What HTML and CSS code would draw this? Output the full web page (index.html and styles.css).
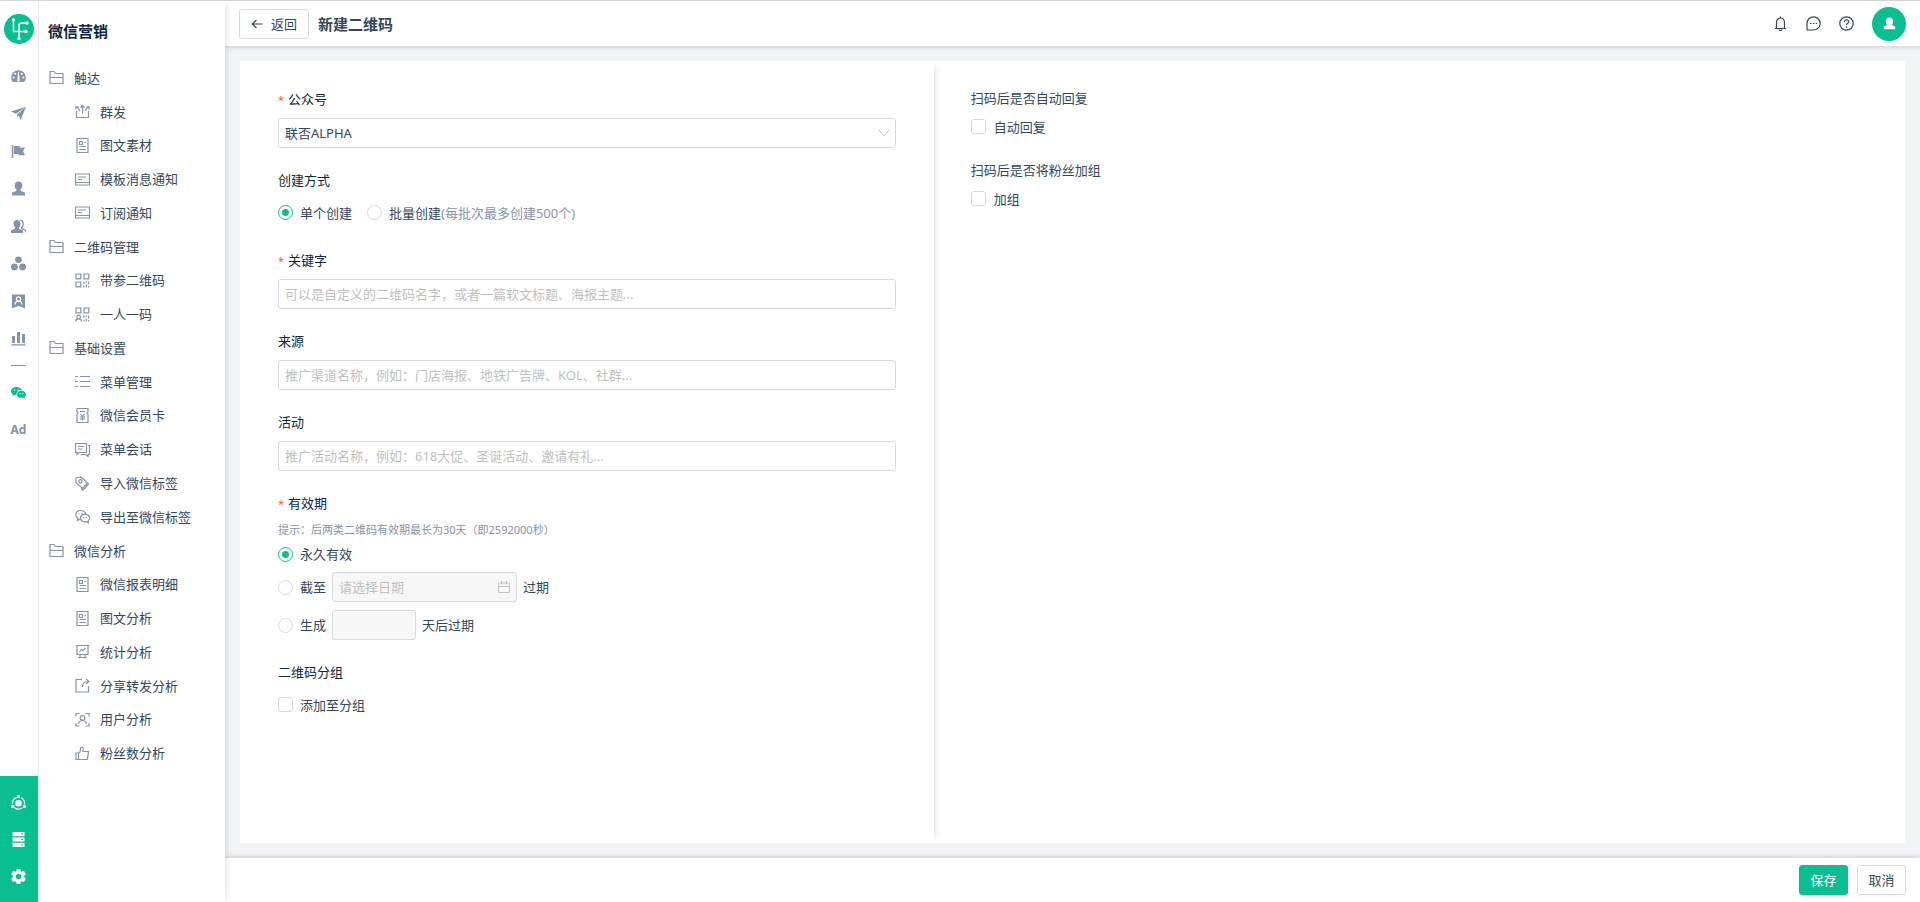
FILE: index.html
```html
<!DOCTYPE html>
<html lang="zh-CN">
<head>
    <meta charset="utf-8">
    <meta name="viewport" content="width=device-width, initial-scale=1">
    <title>新建二维码</title>
    <link rel="stylesheet" href="styles.css">
</head>
<body>
    <!-- icon sprite -->
    <svg class="sprite" aria-hidden="true">
        <symbol id="i-folder" viewBox="0 0 15 15"><path d="M1 13.500V1.500h4l1.500 2h7.500v10zM1 7.500h13"/></symbol>
        <symbol id="i-send" viewBox="0 0 15 15"><path d="M1.500 7v6.500h12V7M7.500 9.500V1.500M5.500 3.500l2-2 2 2M4.500 7C4.500 5 3.500 4 1.500 3M1 5.500V2.800h2.500M10.500 7c0-2 1-3 3-4M14 5.500V2.800h-2.500"/></symbol>
        <symbol id="i-doc" viewBox="0 0 15 15"><path d="M2 .5h11v14H2zM4.500 3.500h3v3h-3zM9.500 4.500h1.500M4.500 8.500h6.500M4.500 11.500h6.500"/></symbol>
        <symbol id="i-card" viewBox="0 0 15 15"><path d="M.5 2h14v11H.5zM.5 10.500h14M3 5h8M3 7.500h4"/></symbol>
        <symbol id="i-qr" viewBox="0 0 15 15"><path d="M1 1h4.800v4.800H1zM9 1h4.800v4.800H9zM1 9h4.800v4.800H1zM9 8.500v2.500M9 12.500v2M11.300 8.500v1.500M13.500 8.500v3M11.300 11.500v3M13.500 13v1.500"/></symbol>
        <symbol id="i-qruser" viewBox="0 0 15 15"><path d="M1 1h4.800v4.800H1zM9 1h4.800v4.800H9zM1.800 10a1.800 1.800 0 1 0 3.600 0 1.800 1.800 0 1 0-3.600 0M.6 14.500c.2-1.700 1-2.700 3-2.700s2.800 1 3 2.700M9 8.500v2.500M9 12.500v2M11.300 8.500v1.500M13.500 8.500v3M11.300 11.500v3M13.500 13v1.500"/></symbol>
        <symbol id="i-list" viewBox="0 0 15 15"><path d="M0 2.500h3M5 2.500h10M0 7.500h3M5 7.500h10M0 12.500h3M5 12.500h10"/></symbol>
        <symbol id="i-member" viewBox="0 0 15 15"><path d="M2 .5h11v3.200a1.500 1.500 0 0 0 0 2.600v8.200H2V6.300a1.500 1.500 0 0 0 0-2.600zM5 3.500h5M5.500 6l2 2.500 2-2.500M5 9h5M5 11h5M7.500 8.500v4"/></symbol>
        <symbol id="i-chat" viewBox="0 0 15 15"><path d="M.5 1.500h11v9H4l-2 2v-2H.500zM3 4.500h6M3 7h4M13 3.500h1.500v9H13v2l-2-2H6"/></symbol>
        <symbol id="i-tag" viewBox="0 0 15 15"><path d="M1 2l5-1 6.500 6-5 5.500L1 6.500zM14 7.500L8 14.200l-2-1.700M3.800 5.200a1.600 1.600 0 1 0 3.200 0 1.600 1.600 0 1 0-3.200 0"/></symbol>
        <symbol id="i-wxline" viewBox="0 0 15 15"><path d="M5 10l-2.500 1.500.3-2.300C-.8 6.500.7 1.500 5.500 1.500c2.700 0 4.500 1.500 5 3.500M10 5.200c-6 .2-6.200 7.500 0 7.600l1.500-.2 1.800 1.200-.2-2C16 9.500 14.200 5.200 10 5.200zM3.800 4v1M7 4v1M8.500 8v1M11.500 8v1"/></symbol>
        <symbol id="i-board" viewBox="0 0 15 15"><path d="M.5 1.500h14M2 1.500v9h11v-9M5 10.500v3M10 10.500v3M3 13.500h9M4.500 8l2-2.500 1.500 1L10.500 4"/></symbol>
        <symbol id="i-share" viewBox="0 0 15 15"><path d="M7 1.500H1v12.500h12.500V8M7.500 9c0-4 1.500-5.500 6-5.500M11 1l3 2.500-3 2.500"/></symbol>
        <symbol id="i-scan" viewBox="0 0 15 15"><path d="M1 4.500V1.500h3.500M10.500 1.500H14v3M14 11v3h-3.500M4.500 14H1v-3M5.200 6a2.300 2.300 0 1 0 4.600 0 2.300 2.300 0 1 0-4.600 0M3.500 12c.3-2.500 1.500-3.500 4-3.500s3.700 1 4 3.500"/></symbol>
        <symbol id="i-like" viewBox="0 0 15 15"><path d="M1 7h2.500v6.500H1zM3.500 7.500L5 6l.8-4.500c1.700-.7 2.700.5 2.500 2L8 5.500h5.500l-1 8h-9"/></symbol>
    </svg>

    <div class="app">
        <aside class="rail">
            <a class="logo" href="#" aria-label="首页">
                <svg viewBox="0 0 30 30"><circle cx="15" cy="15" r="15" fill="#09be90"/><g fill="none" stroke="#fff" stroke-width="1.500"><path d="M9.500 6v11.500h13.500M15 24V11.500q0-2.500 2.500-2.500H23"/></g><g fill="#fff"><circle cx="9.500" cy="6" r="1.700"/><circle cx="23" cy="9" r="1.700"/><circle cx="22" cy="17.500" r="1.700"/><circle cx="15" cy="24.500" r="1.700"/></g></svg>
            </a>
            <nav class="rail-main">
                <a href="#" aria-label="概览"><svg viewBox="0 0 15 15"><path d="M1.800 13A7.300 7.300 0 1 1 13.200 13z"/><g fill="#fff"><circle cx="2.700" cy="8.500" r="1"/><circle cx="4.200" cy="4.700" r="1"/><circle cx="10.800" cy="4.700" r="1"/><circle cx="12.300" cy="8.500" r="1"/><path d="M7 3h1l.7 8.500a1.200 1.200 0 0 1-2.400 0z"/></g></svg></a>
                <a href="#" aria-label="发送"><svg viewBox="0 0 15 15"><path d="M15 .8L0 5.500l5 2.300zM15 .8L6 8.500l.2 2.800 1.800-1.800 1.500 5z"/></svg></a>
                <a href="#" aria-label="旗帜"><svg viewBox="0 0 15 15"><path d="M.8 1h1.400v13H.8zM2.800 2h6v1.500H14l-2 3.700 2 4H7.500V10H2.800z"/></svg></a>
                <a href="#" aria-label="用户"><svg viewBox="0 0 15 15"><path d="M7.500.5c2.400 0 3.800 1.500 3.800 4 0 2-.8 3-1.800 4v1.300l4.500 2V14.500H1v-2.700l4.500-2V8.500c-1-1-1.800-2-1.800-4 0-2.500 1.400-4 3.800-4z"/></svg></a>
                <a href="#" aria-label="用户组"><svg viewBox="0 0 15 15"><path d="M6 1c2.200 0 3.500 1.500 3.500 3.700 0 1.800-.7 3-1.600 3.900v1l4.100 2V14H0v-2.400l4.100-2v-1C3.200 7.700 2.500 6.500 2.500 4.700 2.500 2.500 3.800 1 6 1z"/><path d="M9.500 1.200c3 .3 3.700 5 1.200 7.300v1l3.800 2v1.800" fill="none" stroke="#8494a9" stroke-width="1.300"/></svg></a>
                <a href="#" aria-label="分组"><svg viewBox="0 0 15 15"><circle cx="7.500" cy="3.700" r="3.300"/><circle cx="3.400" cy="10.900" r="3.400"/><circle cx="11.600" cy="10.900" r="3.400"/></svg></a>
                <a href="#" aria-label="名片"><svg viewBox="0 0 15 15"><path d="M1 .5h13v14L7.500 12 1 14.500z"/><g fill="none" stroke="#fff" stroke-width="1.200"><circle cx="7.500" cy="5" r="2.100"/><path d="M4 10.500c.2-2.500 1.300-3.300 3.500-3.300s3.300.8 3.500 3.300"/></g></svg></a>
                <a href="#" aria-label="统计"><svg viewBox="0 0 15 15"><path d="M1 5h3v7H1zM6 1h3v11H6zM11 3h3v9h-3zM.5 13.200h14v1.300H.5z"/></svg></a>
            </nav>
            <nav class="rail-extra">
                <a class="active" href="#" aria-label="微信"><svg viewBox="0 0 15 15"><path d="M5.500 2C2.500 2 0 3.800 0 6.300c0 1.300.7 2.400 1.800 3.200L1.300 11l2-1 2 .4C5 7 7.500 5 11 5.200 10.300 3.300 8.200 2 5.500 2z"/><path d="M10.500 5.800c2.500 0 4.500 1.600 4.500 3.600 0 1.100-.6 2-1.500 2.700l.4 1.400-1.700-.9c-3.500.8-6.300-.8-6.300-3.200 0-2 2-3.600 4.600-3.600z"/><g fill="#fff"><circle cx="3.700" cy="5" r=".7"/><circle cx="7.200" cy="5" r=".7"/><circle cx="9" cy="8.400" r=".6"/><circle cx="12" cy="8.400" r=".6"/></g></svg></a>
                <a class="ad" href="#">Ad</a>
            </nav>
            <nav class="rail-bottom">
                <a href="#" aria-label="集成"><svg viewBox="0 0 15 15"><circle cx="7.500" cy="8.200" r="3.300"/><circle cx="7.500" cy="8.200" r="6" fill="none" stroke="#fff" stroke-width="1.200" stroke-dasharray="8.500 4.070" stroke-dashoffset="-5.170"/><circle cx="7.500" cy="1.700" r="1.600"/><circle cx="1.700" cy="11.500" r="1.700"/><circle cx="13.300" cy="11.500" r="1.700"/></svg></a>
                <a href="#" aria-label="数据"><svg viewBox="0 0 15 15"><path d="M1.500 0h12v4.200h-12zM1.500 5.400h12v4.200h-12zM1.500 10.800h12V15h-12z"/><path d="M10 1.500h2v1h-2zM10 7h2v1h-2zM10 12.500h2v1h-2z" fill="#09be90"/></svg></a>
                <a href="#" aria-label="设置"><svg viewBox="0 0 15 15"><path fill-rule="evenodd" d="M5.700 0h3.600l.5 2.200 1 .6L13 2l1.800 3.200-1.600 1.600v1.400l1.600 1.600L13 13l-2.200-.8-1 .6-.5 2.200H5.700l-.5-2.200-1-.6L2 13 .2 9.800l1.600-1.600V6.800L.2 5.200 2 2l2.200.8 1-.6zM7.500 4.800a2.700 2.700 0 1 0 0 5.400 2.700 2.700 0 0 0 0-5.400z"/></svg></a>
            </nav>
        </aside>

        <aside class="sidebar">
            <h2>微信营销</h2>
            <nav class="menu">
                <a class="group" href="#"><svg><use href="#i-folder"/></svg>触达</a>
                <a href="#"><svg><use href="#i-send"/></svg>群发</a>
                <a href="#"><svg><use href="#i-doc"/></svg>图文素材</a>
                <a href="#"><svg><use href="#i-card"/></svg>模板消息通知</a>
                <a href="#"><svg><use href="#i-card"/></svg>订阅通知</a>
                <a class="group" href="#"><svg><use href="#i-folder"/></svg>二维码管理</a>
                <a href="#"><svg><use href="#i-qr"/></svg>带参二维码</a>
                <a href="#"><svg><use href="#i-qruser"/></svg>一人一码</a>
                <a class="group" href="#"><svg><use href="#i-folder"/></svg>基础设置</a>
                <a href="#"><svg><use href="#i-list"/></svg>菜单管理</a>
                <a href="#"><svg><use href="#i-member"/></svg>微信会员卡</a>
                <a href="#"><svg><use href="#i-chat"/></svg>菜单会话</a>
                <a href="#"><svg><use href="#i-tag"/></svg>导入微信标签</a>
                <a href="#"><svg><use href="#i-wxline"/></svg>导出至微信标签</a>
                <a class="group" href="#"><svg><use href="#i-folder"/></svg>微信分析</a>
                <a href="#"><svg><use href="#i-doc"/></svg>微信报表明细</a>
                <a href="#"><svg><use href="#i-doc"/></svg>图文分析</a>
                <a href="#"><svg><use href="#i-board"/></svg>统计分析</a>
                <a href="#"><svg><use href="#i-share"/></svg>分享转发分析</a>
                <a href="#"><svg><use href="#i-scan"/></svg>用户分析</a>
                <a href="#"><svg><use href="#i-like"/></svg>粉丝数分析</a>
            </nav>
        </aside>

        <div class="main">
            <header class="topbar">
                <button type="button" class="btn back"><svg viewBox="0 0 12 12"><path d="M11.500 6H1.500M5.500 1.800L1.300 6l4.200 4.200"/></svg>返回</button>
                <h1>新建二维码</h1>
                <div class="tools">
                    <a href="#" aria-label="通知"><svg viewBox="0 0 15 15"><path d="M2 12.500h11M3.500 12.500V7c0-3 1.500-5 4-5s4 2 4 5v5.500M7.500 2V.5M6 13.500c.5 1.300 2.500 1.300 3 0"/></svg></a>
                    <a href="#" aria-label="消息"><svg viewBox="0 0 15 15"><path d="M1 14V7.500A6.600 6.600 0 1 1 7.500 14zM4 7.500h1.500M6.800 7.500h1.500M9.600 7.500h1.500"/></svg></a>
                    <a href="#" aria-label="帮助"><svg viewBox="0 0 15 15"><circle cx="7.500" cy="7.500" r="6.700"/><path d="M5.300 6c0-3 4.500-2.700 4.400-.2 0 1.400-2.200 1.500-2.200 3.200M7.500 10.300v1.400"/></svg></a>
                    <a class="avatar" href="#" aria-label="账户"><svg viewBox="0 0 15 15"><path d="M7.500 1.500c2.300 0 3.700 1.500 3.700 3.700 0 1.800-.8 2.800-1.700 3.600l3.700 1.800v2.700H1.800v-2.700l3.700-1.800c-.9-.8-1.700-1.800-1.700-3.600 0-2.200 1.400-3.700 3.700-3.700z"/></svg></a>
                </div>
            </header>

            <form class="content">
                <section class="panel panel-form">
                    <div class="field">
                        <label class="title required" for="account">公众号</label>
                        <div class="select-wrap">
                            <select class="control" id="account"><option>联否ALPHA</option></select>
                            <svg viewBox="0 0 12 12"><path d="M1 3l5 6 5-6"/></svg>
                        </div>
                    </div>
                    <div class="field" role="radiogroup" aria-labelledby="mode-title">
                        <div class="title" id="mode-title">创建方式</div>
                        <div class="options">
                            <label class="option"><input type="radio" name="mode" checked>单个创建</label>
                            <label class="option"><input type="radio" name="mode"><span>批量创建<span class="note">(每批次最多创建500个)</span></span></label>
                        </div>
                    </div>
                    <div class="field">
                        <label class="title required" for="keyword">关键字</label>
                        <input class="control" id="keyword" type="text" placeholder="可以是自定义的二维码名字，或者一篇软文标题、海报主题...">
                    </div>
                    <div class="field">
                        <label class="title" for="source">来源</label>
                        <input class="control" id="source" type="text" placeholder="推广渠道名称，例如：门店海报、地铁广告牌、KOL、社群...">
                    </div>
                    <div class="field">
                        <label class="title" for="activity">活动</label>
                        <input class="control" id="activity" type="text" placeholder="推广活动名称，例如：618大促、圣诞活动、邀请有礼...">
                    </div>
                    <div class="field" role="radiogroup" aria-labelledby="expire-title">
                        <div class="title required" id="expire-title">有效期</div>
                        <p class="hint">提示：后两类二维码有效期最长为30天（即2592000秒）</p>
                        <div class="expire">
                            <label class="option"><input type="radio" name="expire" checked>永久有效</label>
                            <div class="expire-row">
                                <label class="option"><input type="radio" name="expire">截至</label>
                                <div class="date-wrap">
                                    <input class="control" type="text" placeholder="请选择日期" aria-label="过期日期" disabled>
                                    <svg viewBox="0 0 12 12"><path d="M.5 2h11v9.500H.5zM.5 5.500h11M3.500 0v3.500M8.500 0v3.500"/></svg>
                                </div>
                                过期
                            </div>
                            <div class="expire-row">
                                <label class="option"><input type="radio" name="expire">生成</label>
                                <input class="control days" type="text" aria-label="天数" disabled>
                                天后过期
                            </div>
                        </div>
                    </div>
                    <div class="field">
                        <div class="title">二维码分组</div>
                        <div class="options">
                            <label class="option"><input type="checkbox">添加至分组</label>
                        </div>
                    </div>
                </section>

                <section class="panel panel-action">
                    <div class="action">
                        <p>扫码后是否自动回复</p>
                        <label class="option"><input type="checkbox">自动回复</label>
                    </div>
                    <div class="action">
                        <p>扫码后是否将粉丝加组</p>
                        <label class="option"><input type="checkbox">加组</label>
                    </div>
                </section>
            </form>

            <footer class="actions">
                <button type="button" class="btn primary">保存</button>
                <button type="button" class="btn">取消</button>
            </footer>
        </div>
    </div>
</body>
</html>
```
FILE: styles.css
```css
* { box-sizing: border-box; }

body {
    margin: 0;
    font-family: "Noto Sans", "Noto Sans CJK SC", sans-serif;
    font-size: 13px;
    line-height: 20px;
    color: #33475b;
}

a {
    color: inherit;
    text-decoration: none;
}

h1, h2, p { margin: 0; }

h1, h2 {
    font-size: 15px;
    font-weight: 600;
    line-height: 24px;
}

button, input, select {
    font: inherit;
    color: inherit;
}

svg {
    display: block;
    flex: none;
}

.sprite {
    position: absolute;
    width: 0;
    height: 0;
}

.app {
    display: flex;
    min-height: 100vh;
    border-top: 1px solid #d9d9db;
}

/* icon rail */
.rail {
    display: flex;
    flex-direction: column;
    width: 39px;
    padding-top: 13px;
    border-right: 1px solid #e6e8eb;
    fill: #8494a9;
}

.rail nav {
    display: flex;
    flex-direction: column;
    align-items: center;
    padding-right: 1px;
}

.rail nav svg {
    width: 15px;
    height: 15px;
}

.logo svg {
    width: 30px;
    height: 30px;
    margin-left: 4px;
}

.rail-main {
    justify-content: space-between;
    height: 277px;
    margin-top: 25px;
}

.rail-extra {
    gap: 19px;
    margin-top: 19px;
}

.rail-extra::before {
    content: "";
    width: 15px;
    height: 1px;
    background: #8494a9;
}

.rail-extra .active { fill: #09be90; }

.rail-extra .ad {
    font-size: 12px;
    font-weight: 700;
    line-height: 22px;
    color: #8494a9;
}

.rail .rail-bottom {
    gap: 22px;
    height: 126px;
    margin-top: auto;
    padding-top: 19px;
    background: #09be90;
    fill: #fff;
}

/* second level menu */
.sidebar {
    position: relative;
    z-index: 2;
    width: 186px;
    padding-top: 18px;
    background: #fff;
    box-shadow: 4px 0 6px -3px rgba(0, 0, 0, 0.15);
}

.sidebar h2 {
    padding-left: 9px;
    color: #0b2644;
}

.menu {
    display: grid;
    grid-auto-rows: 1fr;
    height: 709px;
    margin-top: 18px;
}

.menu a {
    display: flex;
    align-items: center;
    gap: 10px;
    padding-left: 36px;
}

.menu .group { padding-left: 10px; }

.menu svg {
    width: 15px;
    height: 15px;
    fill: none;
    stroke: #8494a9;
    stroke-width: 1.2;
}

/* page */
.main {
    display: flex;
    flex: 1;
    flex-direction: column;
    min-width: 0;
    background: #f2f3f7;
}

.topbar {
    display: flex;
    align-items: center;
    gap: 9px;
    height: 45px;
    padding: 0 14px;
    background: #fff;
    box-shadow: 0 1px 5px rgba(0, 0, 0, 0.15);
}

.btn {
    min-width: 49px;
    height: 30px;
    padding: 0 10px;
    border: 1px solid #d5dbe1;
    border-radius: 3px;
    background: #fff;
    box-shadow: 0 2px 0 rgba(0, 0, 0, 0.02);
}

.btn.primary {
    border-color: #09be90;
    background: #09be90;
    color: #fff;
}

.back {
    display: flex;
    align-items: center;
    gap: 8px;
    padding: 0 11px;
    box-shadow: none;
}

.back svg {
    width: 12px;
    height: 12px;
    fill: none;
    stroke: #33475b;
    stroke-width: 1.2;
}

.tools {
    display: flex;
    align-items: center;
    gap: 18px;
    margin-left: auto;
}

.tools svg {
    width: 15px;
    height: 15px;
    fill: none;
    stroke: #33475b;
    stroke-width: 1.2;
}

.tools .avatar {
    display: flex;
    align-items: center;
    justify-content: center;
    width: 34px;
    height: 34px;
    border-radius: 50%;
    background: #09be90;
}

.tools .avatar svg {
    fill: #fff;
    stroke: none;
}

.content {
    display: flex;
    flex: 1;
    margin: 15px;
}

.panel { background: #fff; }

.panel-form {
    position: relative;
    width: calc(100% * 5 / 12);
    padding: 19px 38px;
    box-shadow: 6px 0 6px -5px rgba(0, 0, 0, 0.15);
}

.panel-action {
    flex: 1;
    padding: 22px 37px;
}

.field { margin-bottom: 13px; }

.title {
    display: block;
    line-height: 38px;
    color: #0b2644;
}

.required::before {
    content: "*";
    margin-right: 4px;
    font-size: 11px;
    line-height: 1;
    color: #ff5c35;
}

.control {
    display: block;
    width: 100%;
    height: 30px;
    padding: 0 6px;
    border: 1px solid #d5dbe1;
    border-radius: 3px;
    background: #fff;
    appearance: none;
}

.control::placeholder { color: #bfbfbf; }

.control:disabled { background: #f7f7f7; }

.select-wrap, .date-wrap { position: relative; }

.select-wrap svg, .date-wrap svg {
    position: absolute;
    top: 9px;
    right: 6px;
    width: 12px;
    height: 12px;
    fill: none;
    stroke: #bfc4ca;
}

.options {
    display: flex;
    gap: 15px;
    height: 29px;
    padding-bottom: 2px;
}

.option {
    display: flex;
    align-items: center;
    gap: 7px;
}

.option input {
    flex: none;
    width: 15px;
    height: 15px;
    margin: 0;
    border: 1px solid #d5dbe1;
    border-radius: 3px;
    background: #fff;
    appearance: none;
}

.option input[type="radio"] { border-radius: 50%; }

.option input[type="radio"]:checked {
    border-color: #09be90;
    background: radial-gradient(#09be90 3px, #fff 4px);
}

.note, .hint { color: #8494a9; }

.hint {
    font-size: 11px;
    line-height: 16px;
}

.expire {
    display: flex;
    flex-direction: column;
    gap: 8px;
    padding-top: 6px;
}

.expire-row {
    display: flex;
    align-items: center;
    gap: 6px;
}

.date-wrap { width: 185px; }

.date-wrap svg { right: 7px; }

.days { width: 84px; }

.action { margin-bottom: 15px; }

.action p { line-height: 30px; }

.action .option {
    gap: 8px;
    height: 27px;
}

.actions {
    display: flex;
    align-items: center;
    justify-content: flex-end;
    gap: 9px;
    height: 44px;
    padding: 0 14px;
    background: #fff;
    box-shadow: 0 -1px 5px rgba(0, 0, 0, 0.15);
}
```
